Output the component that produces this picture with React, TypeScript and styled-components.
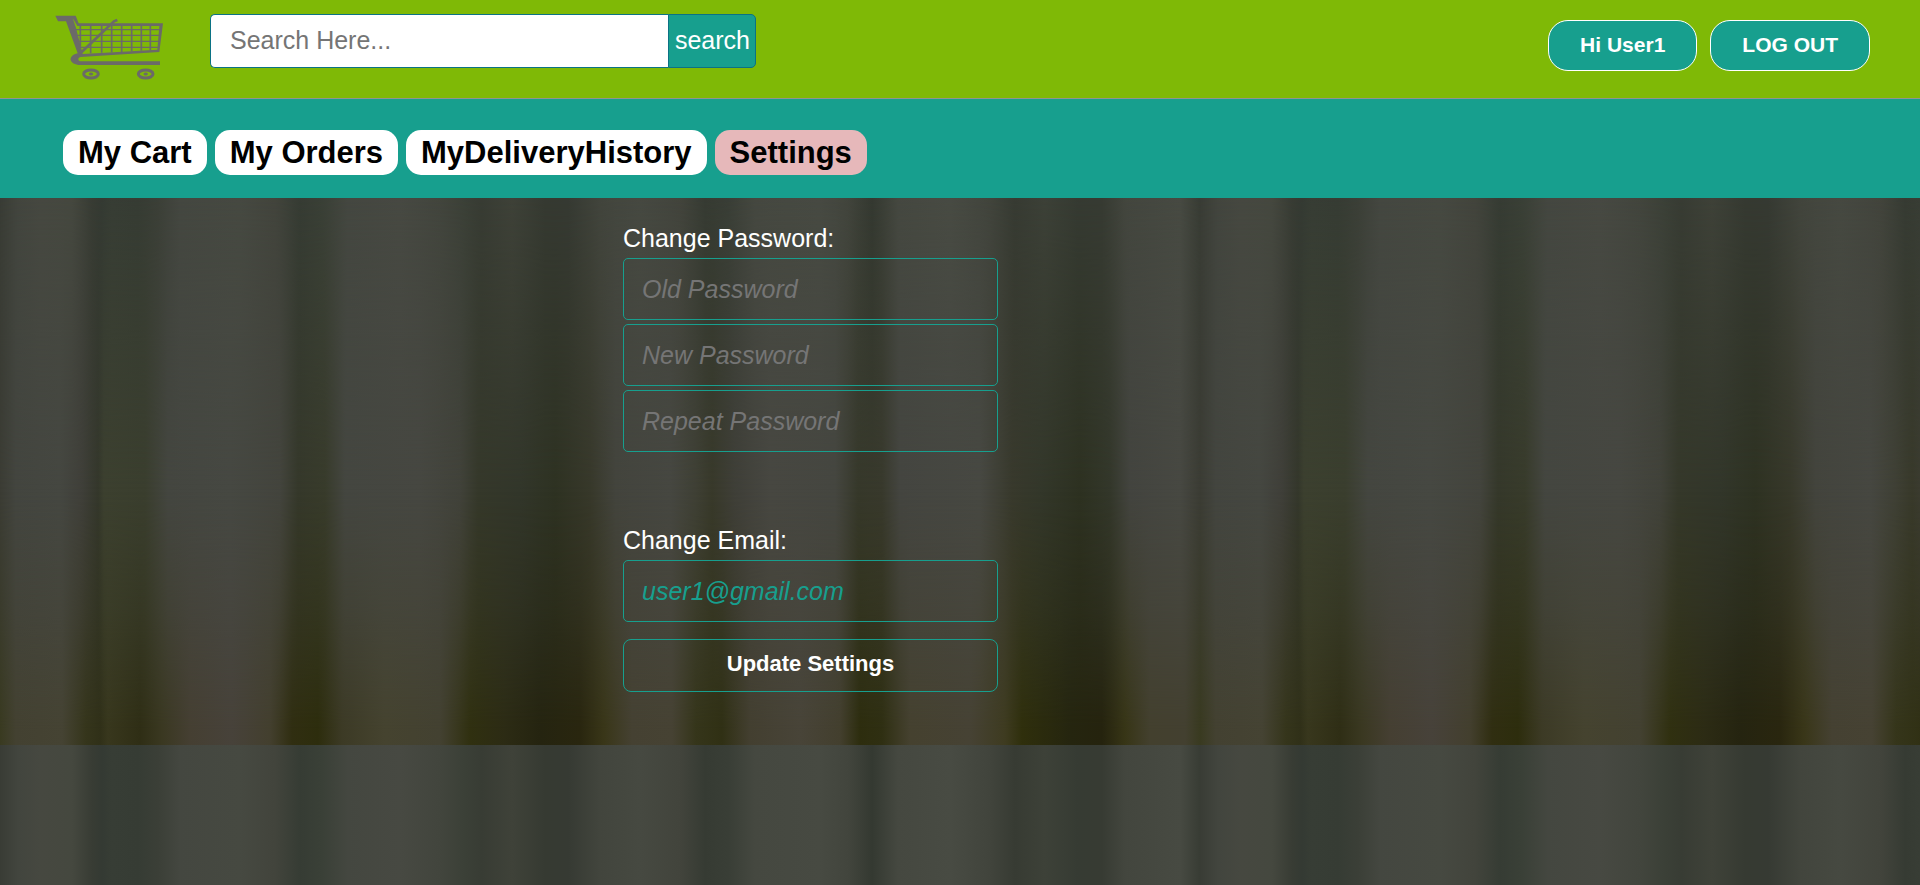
import React from "react";
import styled, { createGlobalStyle, css } from "styled-components";

const teal = "#179f8e";
const font = `"Liberation Sans", Arial, Helvetica, sans-serif`;

const GlobalStyle = createGlobalStyle`
  *, *::before, *::after { box-sizing: border-box; }
  body { margin: 0; font-family: ${font}; }
  button, input { font-family: inherit; }
`;

/* Corrugated backdrop: one 1200x745 tile, repeated over the page. */
const ridgesTop = `linear-gradient(90deg,
  #393c35 0, #42453e 18px, #464840 40px, #45483f 72px, #383c34 92px, #343a33 102px,
  #373d35 112px, #363c34 138px, #3b3f37 158px, #444740 180px, #464941 240px, #42443c 275px,
  #363c34 300px, #3a4037 322px, #444740 348px, #474942 400px, #42453d 440px, #3b4037 465px,
  #383c34 482px, #3f4239 512px, #363a32 545px, #363a33 568px, #42453d 600px, #464941 640px,
  #42443c 680px, #363b33 705px, #393e36 728px, #454840 755px, #474a42 820px, #42453d 848px,
  #343931 872px, #454840 898px, #484b43 950px, #41443c 990px, #373b33 1015px, #3d4138 1045px,
  #363b33 1078px, #373b33 1102px, #43463e 1125px, #474a42 1180px, #383c34 1200px)`;

const ridgesMiddle = `linear-gradient(90deg,
  #3b3c34 0, #43453f 16px, #454741 60px, #3f3f39 82px, #34372b 98px, #3c402f 104px,
  #3a3e2e 145px, #444640 168px, #464842 230px, #43443d 280px, #35382a 298px, #383b2b 325px,
  #444640 345px, #464741 420px, #41423a 460px, #35382a 478px, #32362a 520px, #2e3222 555px,
  #37382a 590px, #43443d 616px, #464741 670px, #3f4035 695px, #38392a 712px, #3f3f38 735px,
  #474741 770px, #454640 835px, #36382a 858px, #38392c 882px, #444540 900px, #474842 980px,
  #38392c 1012px, #33372a 1040px, #2d3121 1080px, #33372a 1110px, #43443f 1130px, #474842 1180px, #3b3c34 1200px)`;

const ridgesBottom = `linear-gradient(90deg,
  #393a20 0, #434131 16px, #454333 62px, #35351b 86px, #303018 100px, #38371d 108px,
  #2f2e15 140px, #3a3821 162px, #453f32 190px, #47423a 232px, #433f2e 270px, #302e11 292px,
  #2d2d0d 318px, #3c3a25 342px, #45432f 385px, #434131 440px, #303010 470px, #2c2b14 505px,
  #252410 540px, #29260f 580px, #393618 604px, #454132 632px, #464233 672px, #35351a 696px,
  #303014 722px, #433f30 750px, #484438 800px, #433f2e 840px, #2d2d0e 860px, #2f2f12 882px,
  #45412f 910px, #464234 970px, #3e3b20 1005px, #2f2f0c 1022px, #25250f 1070px, #25230e 1102px,
  #373516 1125px, #43402e 1150px, #434030 1185px, #393a20 1200px)`;

const backdropLayer = css`
  content: "";
  position: absolute;
  inset: 0;
  z-index: -1;
  background-size: 1200px 745px;
`;

const Page = styled.div`
  position: relative;
  isolation: isolate;
  min-height: 100vh;
  background-image: ${ridgesTop};
  background-size: 1200px 745px;

  &::before {
    ${backdropLayer}
    background-image: ${ridgesMiddle};
    mask-image: linear-gradient(transparent 24%, #000 66%);
    mask-size: 100% 745px;
  }

  &::after {
    ${backdropLayer}
    background-image: ${ridgesBottom};
    mask-image: linear-gradient(transparent 66%, rgba(0, 0, 0, 0.4) 82%, #000 98%);
    mask-size: 100% 745px;
  }
`;

const Header = styled.header`
  display: flex;
  align-items: flex-start;
  padding: 14px 50px 27px 55px;
  background: #7fb906;
  border-bottom: 1px solid #8f9490;
`;

const Logo = styled.a`
  display: block;
  height: 54px;
  margin-right: 46px;

  svg { display: block; margin-top: 1px; }
`;

const SearchForm = styled.form`
  display: flex;
  width: 546px;
  height: 54px;
`;

const SearchInput = styled.input`
  flex: 1;
  min-width: 0;
  padding: 0 19px 2px;
  font-size: 25px;
  background: #fff;
  border: 1px solid #0b7285;
  border-right: 0;
  border-radius: 5px 0 0 5px;
  outline: none;

  &::placeholder { color: #757575; }
`;

const SearchButton = styled.button`
  padding: 0 5px 2px 6px;
  font-size: 25px;
  color: #fff;
  background: ${teal};
  border: 1px solid #0b7285;
  border-radius: 0 5px 5px 0;
`;

const Account = styled.div`
  display: flex;
  gap: 13px;
  margin: 6px 0 0 auto;
`;

const AccountButton = styled.button`
  height: 51px;
  padding: 0 31px 2px;
  font-size: 21px;
  font-weight: bold;
  color: #fff;
  background: ${teal};
  border: 1px solid #fff;
  border-radius: 20px;
  white-space: nowrap;
`;

const Nav = styled.nav`
  display: flex;
  gap: 8px;
  padding: 31px 63px 23px;
  background: ${teal};
`;

const NavLink = styled.a<{ $active?: boolean }>`
  padding: 0 15px;
  font-size: 31px;
  line-height: 45px;
  font-weight: bold;
  color: #000;
  text-decoration: none;
  background: ${(p) => (p.$active ? "#e6b8ba" : "#fff")};
  border-radius: 15px;
`;

const SettingsForm = styled.form`
  display: flex;
  flex-direction: column;
  gap: 17px;
  width: 375px;
  margin-left: calc(50% - 337px);
  padding: 24px 0 48px;
`;

const FieldGroup = styled.div`
  display: flex;
  flex-direction: column;
  gap: 4px;

  & + & { margin-top: 55px; }
`;

const Label = styled.label`
  font-size: 25px;
  line-height: 32px;
  color: #fff;
`;

const Field = styled.input`
  width: 100%;
  height: 62px;
  padding: 0 18px;
  font-size: 25px;
  font-style: italic;
  color: ${teal};
  background: transparent;
  border: 1px solid ${teal};
  border-radius: 5px;
  outline: none;

  &::placeholder { color: #757575; }
`;

const UpdateButton = styled.button`
  height: 53px;
  padding: 0 0 4px;
  font-size: 22px;
  font-weight: bold;
  color: #fff;
  background: transparent;
  border: 1px solid ${teal};
  border-radius: 8px;
`;

const CartIcon = () => (
  <svg width="109" height="65" viewBox="45 45 327 195" fill="none" stroke="#6b6a68" aria-hidden="true">
    <path d="M46 47H107L116 70H369L358 156L122 171C114 173 112 180 120 184H360V195H115C85 190 84 167 113 160L78 64H54Z M98 54L108 84L125 150L128 162L352 149L358 78H112Z" fill="#6b6a68" fillRule="evenodd" stroke="none" />
    <path d="M121 78V140M152 78V160M185 78V158M215 78V157M245 78V156M275 78V154M304 78V152M331 78V151" strokeWidth="5" />
    <path d="M108 89H360M113 106H358M116 124H356M121 142H354" strokeWidth="4" />
    <path d="M121 160L222 64L232 60" strokeWidth="8" />
    <ellipse cx="153" cy="222" rx="22" ry="12" strokeWidth="9" />
    <ellipse cx="317" cy="222" rx="22" ry="12" strokeWidth="9" />
    <ellipse cx="153" cy="222" rx="6" ry="4" fill="#6b6a68" />
    <ellipse cx="317" cy="222" rx="6" ry="4" fill="#6b6a68" />
  </svg>
);

const links = ["My Cart", "My Orders", "MyDeliveryHistory", "Settings"];

export default function App() {
  return (
    <>
      <GlobalStyle />
      <Page>
        <Header>
          <Logo href="#" aria-label="Home">
            <CartIcon />
          </Logo>
          <SearchForm role="search" onSubmit={(e) => e.preventDefault()}>
            <SearchInput type="text" placeholder="Search Here..." aria-label="Search" />
            <SearchButton type="submit">search</SearchButton>
          </SearchForm>
          <Account>
            <AccountButton type="button">Hi User1</AccountButton>
            <AccountButton type="button">LOG OUT</AccountButton>
          </Account>
        </Header>
        <Nav>
          {links.map((name) => (
            <NavLink key={name} href="#" $active={name === "Settings"}>
              {name}
            </NavLink>
          ))}
        </Nav>
        <main>
          <SettingsForm onSubmit={(e) => e.preventDefault()}>
            <FieldGroup>
              <Label htmlFor="old-password">Change Password:</Label>
              <Field id="old-password" type="password" placeholder="Old Password" />
              <Field type="password" placeholder="New Password" aria-label="New Password" />
              <Field type="password" placeholder="Repeat Password" aria-label="Repeat Password" />
            </FieldGroup>
            <FieldGroup>
              <Label htmlFor="email">Change Email:</Label>
              <Field id="email" type="email" defaultValue="user1@gmail.com" />
            </FieldGroup>
            <UpdateButton type="submit">Update Settings</UpdateButton>
          </SettingsForm>
        </main>
      </Page>
    </>
  );
}
